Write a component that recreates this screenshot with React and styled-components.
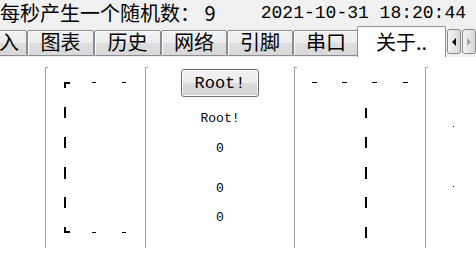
import React from 'react';
import styled, { createGlobalStyle } from 'styled-components';

const Global = createGlobalStyle`
  html, body { margin: 0; padding: 0; background: #f0f0f0; }
  body { width: 476px; height: 269px; overflow: hidden; }
`;

const Window = styled.div`
  width: 476px;
  height: 269px;
  display: flex;
  flex-direction: column;
  background: #f0f0f0;
  overflow: hidden;
`;

const Header = styled.div`
  height: 26px;
  flex: none;
  display: flex;
  align-items: center;
  justify-content: space-between;
  padding-right: 10px;
`;

const Counter = styled.span`
  font-family: "Noto Sans CJK SC", sans-serif;
  font-size: 20px;
  line-height: 26px;
  color: #000;
  white-space: pre;
`;

const Clock = styled.span`
  font-family: "Liberation Mono", monospace;
  font-size: 18px;
  line-height: 26px;
  color: #000;
  white-space: pre;
`;

const TabStrip = styled.div`
  height: 31px;
  flex: none;
  position: relative;
  overflow: hidden;
`;

const Tabs = styled.div`
  display: flex;
  align-items: flex-end;
  height: 31px;
  margin-left: -40px;
`;

const Tab = styled.div`
  box-sizing: border-box;
  flex: none;
  width: ${p => p.$w}px;
  height: ${p => (p.$active ? 31 : 26)}px;
  margin-bottom: ${p => (p.$active ? 0 : 1)}px;
  margin-left: ${p => (p.$active ? -2 : 0)}px;
  position: relative;
  z-index: ${p => (p.$active ? 1 : 0)};
  border: 1px solid #898c95;
  border-bottom: ${p => (p.$active ? 'none' : '1px solid #898c95')};
  border-radius: 2px 2px 0 0;
  background: ${p =>
    p.$active ? '#ffffff' : 'linear-gradient(#f3f3f3 0%, #ebebeb 50%, #dddddd 51%, #d8d8d8 100%)'};
  box-shadow: inset 1px 1px 0 #fcfcfc;
  display: flex;
  align-items: center;
  justify-content: ${p => (p.$end ? 'flex-end' : 'center')};
  padding-right: ${p => (p.$end ? 7 : 0)}px;
  padding-bottom: ${p => (p.$active ? 1 : 3)}px;
  font-family: "Noto Sans CJK SC", sans-serif;
  font-size: 20px;
  color: #000;
  white-space: pre;
`;

const Spinner = styled.div`
  position: absolute;
  top: 3px;
  left: 447px;
  display: flex;
  gap: 1px;
  z-index: 2;
`;

const SpinButton = styled.div`
  box-sizing: border-box;
  width: 14px;
  height: 25px;
  border: 1px solid #8a8a8a;
  border-radius: 3px;
  background: linear-gradient(90deg, #f4f4f4 0%, #e6e6e6 50%, #d6d6d6 100%);
  display: flex;
  align-items: center;
  justify-content: center;
`;

const Arrow = styled.span`
  width: 0;
  height: 0;
  border-top: 4px solid transparent;
  border-bottom: 4px solid transparent;
  ${p =>
    p.$dir === 'left'
      ? `border-right: 4px solid ${p.$color};`
      : `border-left: 4px solid ${p.$color};`}
`;

const Page = styled.div`
  flex: 1;
  background: #ffffff;
  display: flex;
`;

const Lead = styled.div`
  width: 45px;
  flex: none;
`;

const Column = styled.div`
  box-sizing: border-box;
  flex: ${p => (p.$w ? 'none' : '1')};
  width: ${p => (p.$w ? `${p.$w}px` : 'auto')};
  margin-top: 10px;
  height: 181px;
  border-left: 1px solid #a0a0a0;
  position: relative;
  &::before {
    content: '';
    position: absolute;
    left: 0;
    top: 0;
    width: 2px;
    height: 1px;
    background: #a0a0a0;
  }
`;

const Stack = styled.div`
  display: flex;
  flex-direction: column;
  align-items: center;
`;

const RootButton = styled.button`
  box-sizing: border-box;
  margin-top: 2px;
  width: 78px;
  height: 28px;
  padding: 2px 0 0;
  border: 1px solid #707070;
  border-radius: 3px;
  background: linear-gradient(#f2f2f2 0%, #ebebeb 48%, #dddddd 52%, #cfcfcf 100%);
  box-shadow: inset 0 0 0 1px #fbfbfb;
  font-family: "Liberation Mono", monospace;
  font-size: 17px;
  line-height: 22px;
  color: #000;
`;

const Value = styled.div`
  margin-top: ${p => p.$top}px;
  height: 16px;
  line-height: 16px;
  font-family: "Liberation Mono", monospace;
  font-size: 13px;
  color: #000;
`;

const Marks = styled.svg`
  display: block;
`;

const Col1Marks = () => (
  <Marks width="99" height="181" viewBox="0 0 99 181">
    <g fill="#000">
      <rect x="18" y="15" width="2" height="6" />
      <rect x="18" y="15" width="6" height="2" />
      <rect x="46" y="15" width="4" height="1" />
      <rect x="76" y="15" width="4" height="1" />
      <rect x="18" y="40" width="2" height="11" />
      <rect x="18" y="70" width="2" height="11" />
      <rect x="18" y="100" width="2" height="12" />
      <rect x="18" y="130" width="2" height="11" />
      <rect x="18" y="160" width="2" height="6" />
      <rect x="18" y="164" width="6" height="2" />
      <rect x="46" y="165" width="4" height="1" />
      <rect x="76" y="165" width="4" height="1" />
    </g>
  </Marks>
);

const Col3Marks = () => (
  <Marks width="130" height="181" viewBox="0 0 130 181">
    <g fill="#000">
      <rect x="17" y="15" width="5" height="1" />
      <rect x="47" y="15" width="5" height="1" />
      <rect x="77" y="15" width="5" height="1" />
      <rect x="108" y="15" width="5" height="1" />
      <rect x="70" y="41" width="2" height="10" />
      <rect x="70" y="70" width="2" height="11" />
      <rect x="70" y="100" width="2" height="12" />
      <rect x="70" y="130" width="2" height="11" />
      <rect x="70" y="160" width="2" height="11" />
    </g>
  </Marks>
);

const Col4Marks = () => (
  <Marks width="50" height="181" viewBox="0 0 50 181">
    <g fill="#000">
      <rect x="27" y="59" width="1" height="1" />
      <rect x="27" y="119" width="1" height="1" />
    </g>
  </Marks>
);

const tabs = [
  { label: '入', w: 67, end: true },
  { label: '图表', w: 67 },
  { label: '历史', w: 67 },
  { label: '网络', w: 66 },
  { label: '引脚', w: 66 },
  { label: '串口', w: 66 },
  { label: '关于..', w: 89, active: true },
];

export default function App() {
  return (
    <>
      <Global />
      <Window>
        <Header>
          <Counter>每秒产生一个随机数： 9</Counter>
          <Clock>2021-10-31 18:20:44</Clock>
        </Header>
        <TabStrip>
          <Tabs>
            {tabs.map(t => (
              <Tab key={t.label} $w={t.w} $active={t.active} $end={t.end}>
                {t.label}
              </Tab>
            ))}
          </Tabs>
          <Spinner>
            <SpinButton>
              <Arrow $dir="left" $color="#000" />
            </SpinButton>
            <SpinButton>
              <Arrow $dir="right" $color="#a0a0a0" />
            </SpinButton>
          </Spinner>
        </TabStrip>
        <Page>
          <Lead />
          <Column $w={100}>
            <Col1Marks />
          </Column>
          <Column $w={149}>
            <Stack>
              <RootButton>Root!</RootButton>
              <Value $top={14}>Root!</Value>
              <Value $top={14}>0</Value>
              <Value $top={24}>0</Value>
              <Value $top={13}>0</Value>
            </Stack>
          </Column>
          <Column $w={131}>
            <Col3Marks />
          </Column>
          <Column>
            <Col4Marks />
          </Column>
        </Page>
      </Window>
    </>
  );
}
